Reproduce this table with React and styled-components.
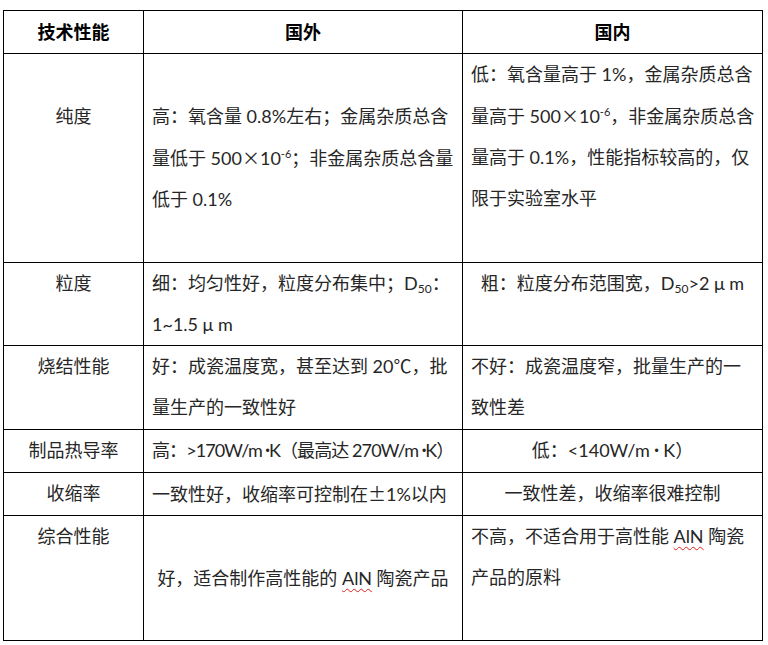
import React from "react";
import styled, { createGlobalStyle } from "styled-components";

const GlobalStyle = createGlobalStyle`
  html, body {
    margin: 0;
    padding: 0;
    background: #ffffff;
  }
`;

const Page = styled.div`
  padding: 10px 0 0 3px;
`;

const Table = styled.table`
  border-collapse: collapse;
  table-layout: fixed;
  width: 760px;
  font-family: "Lato", "Noto Sans CJK SC", sans-serif;
  font-size: 18px;
  color: #262626;
`;

const Row = styled.tr`
  height: ${({ h }) => h}px;
`;

const Heading = styled.th`
  border: 1px solid #000000;
  padding: 0;
  font-weight: 700;
  font-size: 18px;
  color: #000000;
  text-align: center;
  vertical-align: middle;
  line-height: 41px;
`;

const Cell = styled.td`
  border: 1px solid #000000;
  padding: ${({ pt }) => pt || 0}px 8px 0 8px;
  line-height: 41px;
  white-space: nowrap;
  overflow: hidden;
  letter-spacing: ${({ tight }) => (tight ? "-0.9px" : "normal")};
  text-align: ${({ center }) => (center ? "center" : "left")};
  vertical-align: ${({ middle }) => (middle ? "middle" : "top")};
`;

const Label = styled(Cell)`
  text-align: center;
  padding-left: 0;
  padding-right: 0;
`;

const Sup = styled.sup`
  font-size: 11px;
  line-height: 0;
  vertical-align: 7px;
`;

const Sub = styled.sub`
  font-size: 12px;
  line-height: 0;
  vertical-align: -3px;
`;

const Wide = styled.span`
  font-family: "Noto Sans CJK SC", sans-serif;
`;

const Dot = styled.span`
  font-family: "Liberation Sans", sans-serif;
  font-size: 12px;
  vertical-align: 2px;
`;

const Spell = styled.span`
  text-decoration: underline wavy #e02020;
  text-decoration-thickness: 1px;
  text-underline-offset: 3px;
`;

export default function App() {
  return (
    <Page>
      <GlobalStyle />
      <Table>
        <colgroup>
          <col style={{ width: 140 }} />
          <col style={{ width: 319 }} />
          <col style={{ width: 300 }} />
        </colgroup>
        <thead>
          <Row h={43}>
            <Heading>技术性能</Heading>
            <Heading>国外</Heading>
            <Heading>国内</Heading>
          </Row>
        </thead>
        <tbody>
          <Row h={209}>
            <Label pt={42}>纯度</Label>
            <Cell middle>
              高：氧含量 0.8%左右；金属杂质总含
              <br />
              量低于 500<Wide>×</Wide>10<Sup>-6</Sup>；非金属杂质总含量
              <br />
              低于 0.1%
            </Cell>
            <Cell>
              低：氧含量高于 1%，金属杂质总含
              <br />
              量高于 500<Wide>×</Wide>10<Sup>-6</Sup>，非金属杂质总含
              <br />
              量高于 0.1%，性能指标较高的，仅
              <br />
              限于实验室水平
            </Cell>
          </Row>
          <Row h={83}>
            <Label>粒度</Label>
            <Cell>
              细：均匀性好，粒度分布集中；D<Sub>50</Sub>：
              <br />
              1~1.5 μ m
            </Cell>
            <Cell center>
              粗：粒度分布范围宽，D<Sub>50</Sub>&gt;2 μ m
            </Cell>
          </Row>
          <Row h={84}>
            <Label>烧结性能</Label>
            <Cell>
              好：成瓷温度宽，甚至达到 20℃，批
              <br />
              量生产的一致性好
            </Cell>
            <Cell>
              不好：成瓷温度窄，批量生产的一
              <br />
              致性差
            </Cell>
          </Row>
          <Row h={43}>
            <Label>制品热导率</Label>
            <Cell tight>
              高：&gt;170W/m <Dot>•</Dot>K（最高达 270W/m <Dot>•</Dot>K）
            </Cell>
            <Cell center>
              低：&lt;140W/m <Dot>•</Dot> K）
            </Cell>
          </Row>
          <Row h={42}>
            <Label>收缩率</Label>
            <Cell>
              一致性好，收缩率可控制在<Wide>±</Wide>1%以内
            </Cell>
            <Cell center>一致性差，收缩率很难控制</Cell>
          </Row>
          <Row h={125}>
            <Label>综合性能</Label>
            <Cell middle center>
              好，适合制作高性能的 <Spell>AlN</Spell> 陶瓷产品
            </Cell>
            <Cell>
              不高，不适合用于高性能 <Spell>AlN</Spell> 陶瓷
              <br />
              产品的原料
            </Cell>
          </Row>
        </tbody>
      </Table>
    </Page>
  );
}
